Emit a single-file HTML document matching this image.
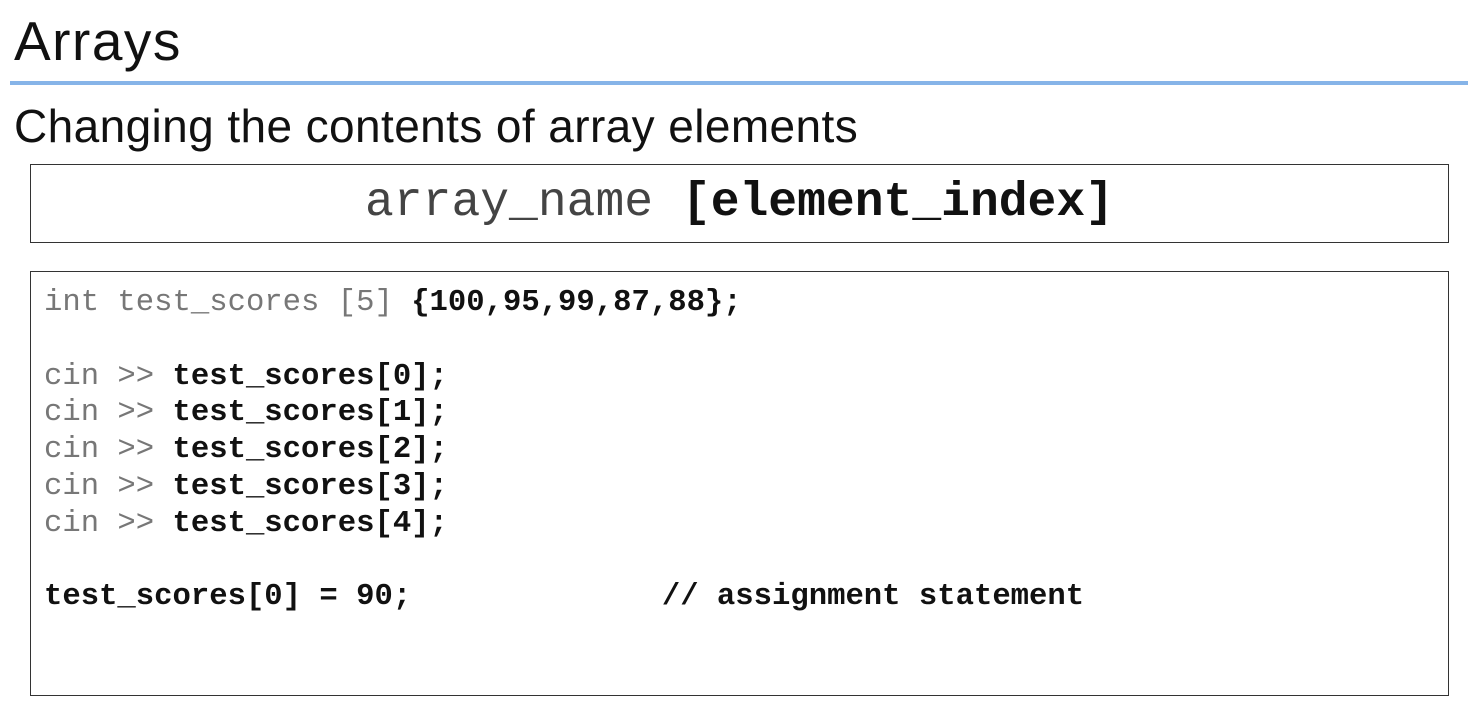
<!DOCTYPE html>
<html><head><meta charset="utf-8"><style>
body{margin:0;width:1468px;height:704px;background:#fff;position:relative;overflow:hidden;font-family:"Liberation Sans",sans-serif;color:#111}
.t{position:absolute;left:14px;top:6px;font-size:55px;line-height:70px;letter-spacing:1.5px}
.hr{position:absolute;left:10px;right:0;top:81px;height:4px;background:#86b4e8}
.s{position:absolute;left:14px;top:98px;font-size:46px;line-height:56px;letter-spacing:0.4px}
.b1{position:absolute;left:30px;top:164px;width:1417px;height:77px;border:1.5px solid #333}
.b1 div{position:absolute;left:0;right:0;top:0;text-align:center;font-family:"Liberation Mono",monospace;font-size:48px;line-height:77px;color:#444}
.b1 b{color:#111}
.b2{position:absolute;left:30px;top:271px;width:1417px;height:423px;border:1.5px solid #333}
pre{position:absolute;left:13px;top:13px;margin:0;font-family:"Liberation Mono",monospace;font-size:30.6px;line-height:36.8px;color:#777}
pre b{color:#111}
.c{margin-left:12px}
</style></head><body>
<div class="t">Arrays</div>
<div class="hr"></div>
<div class="s">Changing the contents of array elements</div>
<div class="b1"><div>array_name <b>[element_index]</b></div></div>
<div class="b2"><pre>int test_scores [5] <b>{100,95,99,87,88};</b>

cin &gt;&gt; <b>test_scores[0];</b>
cin &gt;&gt; <b>test_scores[1];</b>
cin &gt;&gt; <b>test_scores[2];</b>
cin &gt;&gt; <b>test_scores[3];</b>
cin &gt;&gt; <b>test_scores[4];</b>

<b>test_scores[0] = 90;             <span class="c">// assignment statement</span></b></pre></div>
</body></html>
